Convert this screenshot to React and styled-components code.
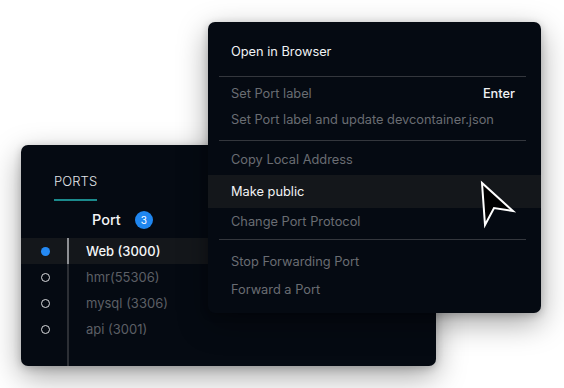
import React from 'react'
import styled, { createGlobalStyle } from 'styled-components'

const GlobalStyle = createGlobalStyle`
  html, body {
    margin: 0;
    padding: 0;
    background: #ffffff;
  }
  body {
    font-family: Inter, "Open Sans", "Liberation Sans", sans-serif;
    -webkit-font-smoothing: antialiased;
  }
`

const ports = [
  { name: 'Web (3000)', active: true },
  { name: 'hmr(55306)' },
  { name: 'mysql (3306)' },
  { name: 'api (3001)' },
]

const Stage = styled.div`
  position: relative;
  width: 564px;
  height: 388px;
  overflow: hidden;
`

const Window = styled.div`
  position: absolute;
  background: #050a12;
  border-radius: 7px;
  box-shadow: 0 10px 30px rgba(0, 0, 0, 0.36), 0 2px 8px rgba(0, 0, 0, 0.2);
  display: flex;
  flex-direction: column;
  overflow: hidden;
`

const PortsWindow = styled(Window)`
  left: 21px;
  top: 145px;
  width: 415px;
  height: 221px;
`

const MenuWindow = styled(Window)`
  left: 208px;
  top: 22px;
  width: 333px;
  height: 291px;
  padding: 16px 0 9px;
  box-sizing: border-box;
`

const TabBar = styled.div`
  display: flex;
  padding: 28px 0 0 33px;
`

const Tab = styled.div`
  font-size: 13px;
  line-height: 16px;
  font-weight: 300;
  color: #e2e4e8;
  letter-spacing: 0.1px;
  padding-bottom: 10px;
  border-bottom: 2px solid #1b8a8c;
`

const PortHeader = styled.div`
  display: flex;
  align-items: center;
  height: 37px;
  padding-left: 71px;
  gap: 14px;
`

const HeaderLabel = styled.span`
  font-size: 14.5px;
  font-weight: 500;
  color: #f3f4f6;
`

const Badge = styled.span`
  width: 18px;
  height: 18px;
  border-radius: 50%;
  background: #1f86ef;
  color: #ffffff;
  font-size: 10px;
  display: flex;
  align-items: center;
  justify-content: center;
`

const List = styled.div`
  flex: 1;
  display: flex;
  flex-direction: column;
`

const Row = styled.div`
  display: flex;
  height: 26px;
  background: ${p => (p.$active ? '#14171b' : 'transparent')};
`

const BulletCell = styled.div`
  width: 46px;
  display: flex;
  align-items: center;
  padding-left: 20px;
  box-sizing: border-box;
`

const Bullet = styled.span`
  width: 9px;
  height: 9px;
  border-radius: 50%;
  box-sizing: border-box;
  background: ${p => (p.$active ? '#2489f4' : 'transparent')};
  border: ${p => (p.$active ? 'none' : '1.5px solid #d9dadd')};
`

const Label = styled.div`
  flex: 1;
  display: flex;
  align-items: center;
  padding-left: 17px;
  border-left: 2px solid ${p => (p.$active ? '#8e9094' : '#2c2f35')};
  font-size: 13px;
  font-weight: ${p => (p.$active ? 500 : 400)};
  color: ${p => (p.$active ? '#f5f6f8' : '#5c5f65')};
`

const ListTail = styled.div`
  flex: 1;
  margin-left: 46px;
  border-left: 2px solid #2c2f35;
`

const Item = styled.div`
  display: flex;
  align-items: center;
  justify-content: space-between;
  flex-shrink: 0;
  height: ${p => p.$h || 26}px;
  margin-top: ${p => p.$mt || 0}px;
  padding: 0 26px 0 23px;
  font-size: 12.8px;
  color: ${p => (p.$bright ? '#f1f2f4' : '#6a6d73')};
  background: ${p => (p.$hover ? '#14171b' : 'transparent')};
`

const Shortcut = styled.span`
  color: #f1f2f4;
  font-weight: 500;
`

const Divider = styled.div`
  flex-shrink: 0;
  height: 1px;
  background: #34373d;
  margin: ${p => p.$m} 15px ${p => p.$mb} 11px;
`

const Pointer = styled.svg`
  position: absolute;
  left: 479px;
  top: 180px;
`

const Cursor = () => (
  <Pointer width="38" height="50" viewBox="0 0 38 50">
    <path
      d="M3 3 L6 45 L15 28 L34 31 Z"
      fill="#000"
      stroke="#fff"
      strokeWidth="2"
      strokeLinejoin="miter"
    />
  </Pointer>
)

export default function App() {
  return (
    <Stage>
      <GlobalStyle />
      <PortsWindow>
        <TabBar>
          <Tab>PORTS</Tab>
        </TabBar>
        <PortHeader>
          <HeaderLabel>Port</HeaderLabel>
          <Badge>3</Badge>
        </PortHeader>
        <List>
          {ports.map(p => (
            <Row key={p.name} $active={p.active}>
              <BulletCell>
                <Bullet $active={p.active} />
              </BulletCell>
              <Label $active={p.active}>{p.name}</Label>
            </Row>
          ))}
          <ListTail />
        </List>
      </PortsWindow>

      <MenuWindow>
        <Item $bright>Open in Browser</Item>
        <Divider $m="11.5px" $mb="3.5px" />
        <Item>
          Set Port label
          <Shortcut>Enter</Shortcut>
        </Item>
        <Item>Set Port label and update devcontainer.json</Item>
        <Divider $m="7.5px" $mb="5.5px" />
        <Item>Copy Local Address</Item>
        <Item $bright $hover $h={33} $mt={3}>Make public</Item>
        <Item>Change Port Protocol</Item>
        <Divider $m="4.5px" $mb="7.5px" />
        <Item $h={28}>Stop Forwarding Port</Item>
        <Item $h={28}>Forward a Port</Item>
      </MenuWindow>

      <Cursor />
    </Stage>
  )
}
